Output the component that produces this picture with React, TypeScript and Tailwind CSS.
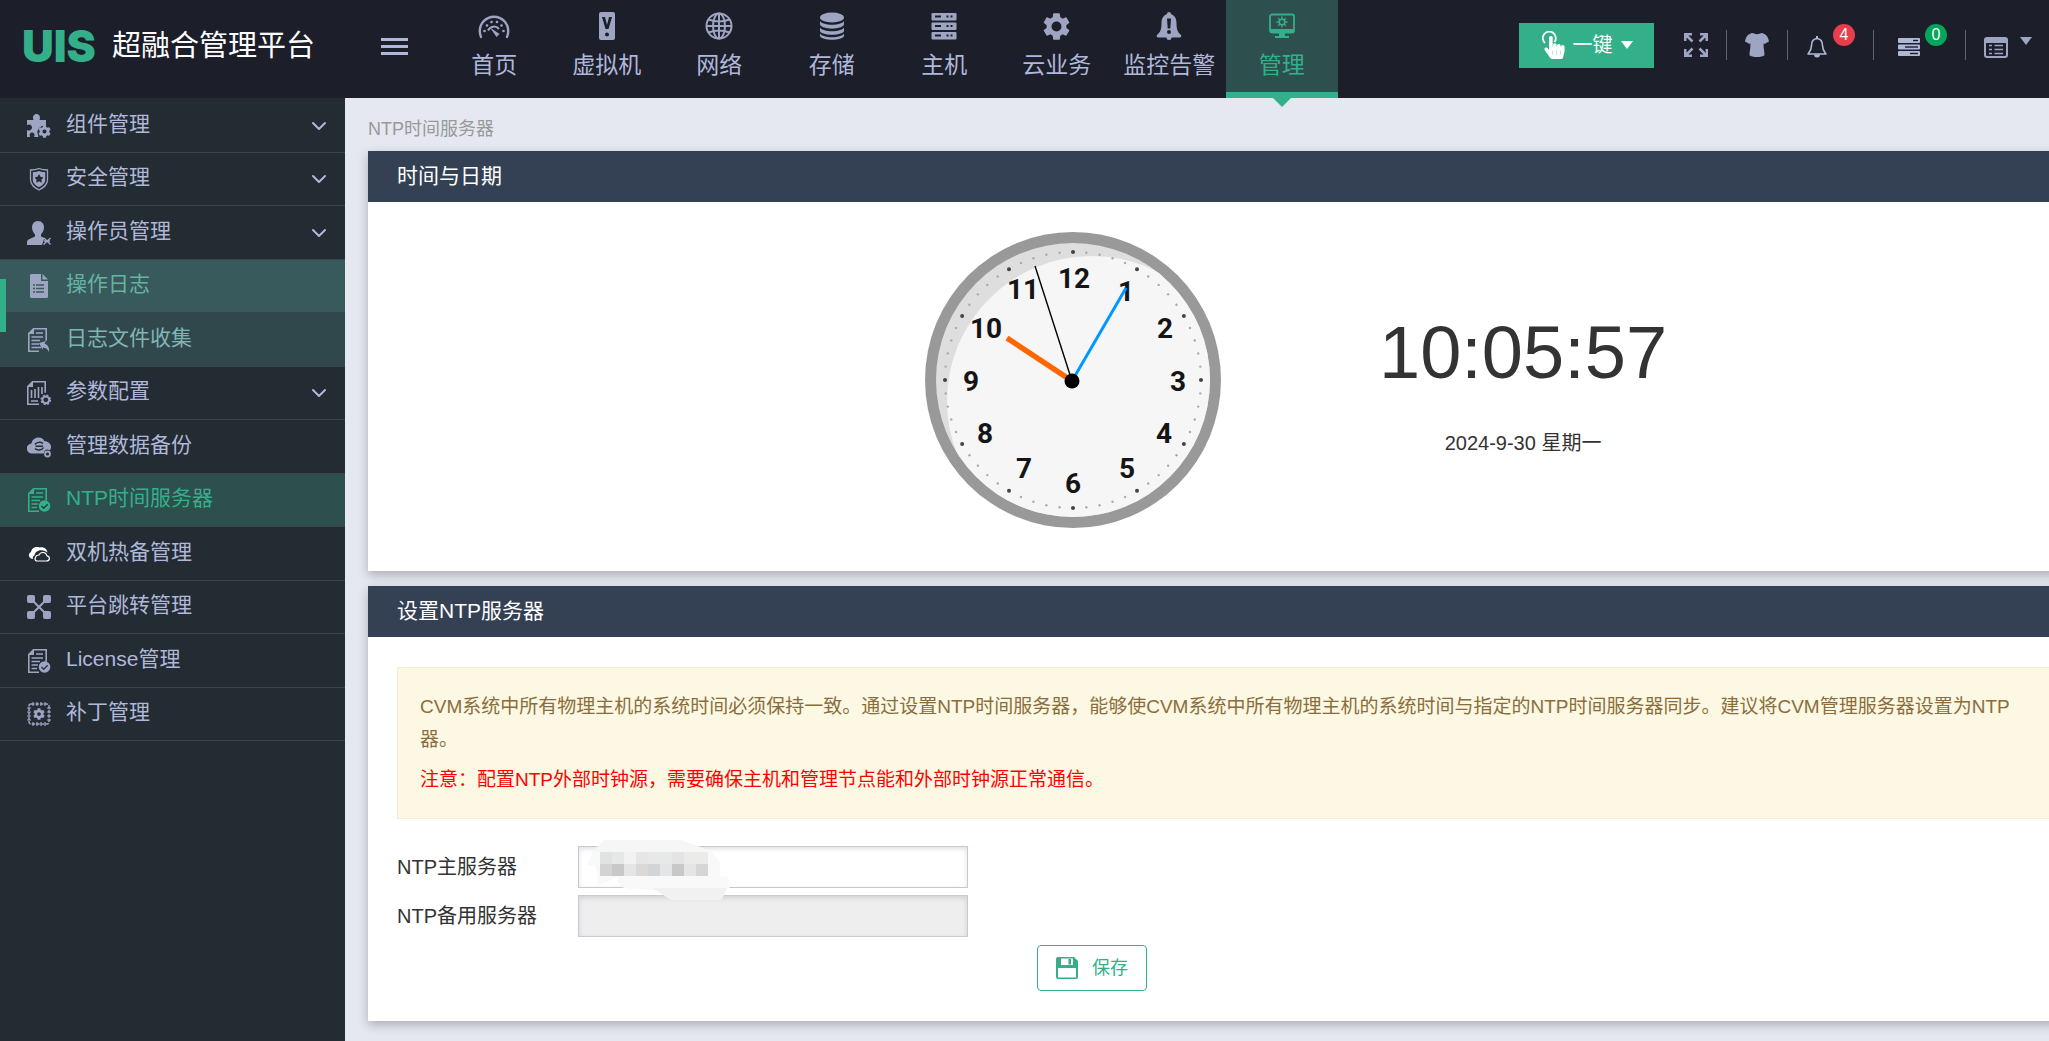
import { useState } from 'react';
import type { ReactNode } from 'react';
import { ChevronDown } from 'lucide-react';
import { FaCog, FaHandPointer, FaStar } from 'react-icons/fa';
import { MdSettings } from 'react-icons/md';

const ALERT_TEXT =
  'CVM系统中所有物理主机的系统时间必须保持一致。通过设置NTP时间服务器，能够使CVM系统中所有物理主机的系统时间与指定的NTP时间服务器同步。建议将CVM管理服务器设置为NTP';

function Svg({ size = 24, box = 24, children }: { size?: number; box?: number; children: ReactNode }) {
  return (
    <svg width={size} height={size} viewBox={`0 0 ${box} ${box}`} fill="currentColor" aria-hidden="true">
      {children}
    </svg>
  );
}

/* ---------- top navigation icons ---------- */

function GaugeIcon() {
  return (
    <Svg size={32} box={32}>
      <path d="M3 27A14.500 14.500 0 0 1 1.800 21 14.200 14.200 0 0 1 30.200 21 14.500 14.500 0 0 1 29 27" fill="none" stroke="currentColor" strokeWidth="2.400" strokeLinecap="round" />
      <path d="M12 17.500l9.500 6.500-3 3z" />
      <path d="M10 20.500a6.500 6.500 0 0 1 11-1.500" fill="none" stroke="currentColor" strokeWidth="2" />
      <circle cx="6.500" cy="21" r="1.300" />
      <circle cx="9" cy="15.500" r="1.300" />
      <circle cx="13.500" cy="12" r="1.300" />
      <circle cx="19" cy="12" r="1.300" />
      <circle cx="23.500" cy="15.500" r="1.300" />
      <circle cx="25.500" cy="21" r="1.300" />
    </Svg>
  );
}

function VmIcon() {
  return (
    <Svg size={28} box={28}>
      <path
        fillRule="evenodd"
        d="M8 0h12a2 2 0 0 1 2 2v24a2 2 0 0 1-2 2H8a2 2 0 0 1-2-2V2a2 2 0 0 1 2-2zM9 5l3.500 12h3L19 5h-3l-2 8-2-8zM14 20.500a2 2 0 1 0 0 4 2 2 0 0 0 0-4z"
      />
    </Svg>
  );
}

function GlobeIcon() {
  return (
    <svg width="28" height="28" viewBox="0 0 28 28" fill="none" stroke="currentColor" strokeWidth="2" aria-hidden="true">
      <circle cx="14" cy="14" r="12.500" />
      <ellipse cx="14" cy="14" rx="6" ry="12.500" />
      <path d="M14 1.500v25M1.500 14h25M3.500 7.500q10.500 4 21 0M3.500 20.500q10.500-4 21 0" />
    </svg>
  );
}

function StorageIcon() {
  return (
    <Svg size={28} box={28}>
      <ellipse cx="14" cy="5.500" rx="12" ry="5" />
      <path d="M2 9c3 5 21 5 24 0v3.500c-2 5.500-22 5.500-24 0z" />
      <path d="M2 15.500c3 5 21 5 24 0V19c-2 5-22 5-24 0z" />
      <path d="M2 21.500c3 5 21 5 24 0V24c-2 5-22 5-24 0z" />
    </Svg>
  );
}

function HostIcon() {
  return (
    <Svg size={28} box={28}>
      {[1, 10.500, 20].map((y) => (
        <g key={y}>
          <rect x="1.500" y={y} width="25" height="7.500" rx="1" />
          <path d={`M5 ${y + 3.500}h6M16.500 ${y + 3.500}h2M20.500 ${y + 3.500}h2`} stroke="#1c1e29" strokeWidth="2" />
        </g>
      ))}
    </Svg>
  );
}

function AlarmIcon() {
  return (
    <Svg size={28} box={28}>
      <path
        fillRule="evenodd"
        d="M14 0c1.200 0 2 .8 2 2 4 1.500 5.500 5 5.500 9 0 7 1.500 9.500 4.500 12 .8 1.200.2 2.500-1.500 2.500h-8a2.500 2.500 0 0 1-5 0h-8c-1.700 0-2.300-1.300-1.500-2.500 3-2.500 4.500-5 4.500-12 0-4 1.500-7.500 5.500-9 0-1.200.8-2 2-2zM12 6.500l.7 10h2.600l.7-10zM14 18a2 2 0 1 0 0 4 2 2 0 0 0 0-4z"
      />
    </Svg>
  );
}

function ManageIcon() {
  return (
    <Svg size={28} box={28}>
      <rect x="2" y="2.500" width="24" height="18" rx="2" fill="none" stroke="currentColor" strokeWidth="1.800" />
      <path d="M2 17h24v2.500a1.500 1.500 0 0 1-1.500 1.500h-21A1.500 1.500 0 0 1 2 19.500zM11 21h6v3h-6zM7 24h14v2H7z" />
      <circle cx="14" cy="10" r="2.800" fill="none" stroke="currentColor" strokeWidth="1.600" />
      <path d="M14 4.500v3M14 12.500v3M8.500 10h3M16.500 10h3M10.200 6.200l2 2M15.800 11.800l2 2M17.800 6.200l-2 2M12.200 11.800l-2 2" stroke="currentColor" strokeWidth="1.500" />
    </Svg>
  );
}

/* ---------- sidebar icons (24 x 24) ---------- */

function ComponentIcon() {
  return (
    <Svg>
      <path d="M0 6h6.500C5 2.500 7 0 9.500 0S14 2.500 12.500 6H19v6c-5-1-9 3-8.500 7l1 4H7c1.500-3-.5-4.500-2-4.500S2 20 3 23H0v-7c3 1.500 5-.5 5-2.500S3 9.500 0 11z" />
      <FaCog x={11} y={11} size={13} />
    </Svg>
  );
}

function ShieldIcon() {
  return (
    <Svg>
      <path d="M12 1.500c3 1.200 5.500 1.500 8.500 1.500v10c0 5-4 7.500-8.500 10C7.500 20.500 3.500 18 3.500 13V3C6.500 3 9 2.700 12 1.500z" fill="none" stroke="currentColor" strokeWidth="1.300" />
      <path d="M12 4c2.300.8 4 1.200 6.200 1.200V13c0 3.500-3 5.500-6.200 7.300C8.800 18.500 5.800 16.500 5.800 13V5.200C8 5.200 9.700 4.800 12 4z" />
      <FaStar x={7.5} y={7} size={9} color="#232b33" />
    </Svg>
  );
}

function OperatorIcon() {
  return (
    <Svg>
      <path d="M11 0c4 0 6 3 6 6.500 0 3-1.500 5-3 7v2l3.500 1.500-2.500 7H0v-3c0-3 6-4 8-5.500v-2c-1.500-2-3-4-3-7C5 3 7 0 11 0z" />
      <path d="M17 17l6.500 6.500M23.500 17L16.500 23.500M17 20h6" stroke="currentColor" strokeWidth="1.400" />
    </Svg>
  );
}

function LogIcon() {
  return (
    <Svg>
      <path d="M4.500 0H14v7h7v15.500a1.500 1.500 0 0 1-1.500 1.500h-15A1.500 1.500 0 0 1 3 22.500v-21A1.500 1.500 0 0 1 4.500 0zM15.500 0L21 5.500h-5.500z" />
      <path d="M6 11h2M9 11h8M6 14.500h2M9 14.500h8M6 18h2M9 18h8" stroke="#385a5c" strokeWidth="1.400" />
    </Svg>
  );
}

// Page outline with a folded corner, shared by the document-type icons.
function PageOutline() {
  return (
    <>
      <path d="M12 23.200H1.800V5.500L6.500.8h12.700v12" fill="none" stroke="currentColor" strokeWidth="1.600" />
      <path d="M1 6l6-6v6z" />
    </>
  );
}

function CollectIcon() {
  return (
    <Svg>
      <PageOutline />
      <path d="M9 5h7M4.500 9H16M4.500 12.500H13M4.500 16H12M4.500 19.500H14" stroke="currentColor" strokeWidth="1.400" />
      <path d="M12 15l7-2-1.500 2.500c4 1.500 5 5 4.500 8.500-1.500-3-3-4-6-4.500l-.5 2z" />
    </Svg>
  );
}

function DocCheckIcon() {
  return (
    <Svg>
      <PageOutline />
      <path d="M9 5h7M4.500 9H16M4.500 12.500H13M4.500 16H11M4.500 19.500H10" stroke="currentColor" strokeWidth="1.400" />
      <circle cx="17.500" cy="18" r="5.800" />
      <path d="M14.500 18l2.200 2.200 4-4" fill="none" stroke="#2b3a40" strokeWidth="1.500" />
    </Svg>
  );
}

function ParamIcon() {
  return (
    <Svg>
      <path d="M12 23.200H.8V5.500L5.500.8h12.700v11" fill="none" stroke="currentColor" strokeWidth="1.600" />
      <path d="M0 6l6-6v6z" />
      <path d="M4.500 9v8M8 8v9M11.500 6v11M15 6v7M4 20h7" stroke="currentColor" strokeWidth="1.600" />
      <circle cx="18.800" cy="18.800" r="3.400" fill="none" stroke="currentColor" strokeWidth="2" />
      <circle cx="18.800" cy="18.800" r="4.700" fill="none" stroke="currentColor" strokeWidth="1.300" strokeDasharray="2 1.700" />
    </Svg>
  );
}

function BackupIcon() {
  return (
    <Svg>
      <path d="M5 18.500a5 5 0 0 1-.5-10C5 5 8 2.500 11.500 2.500c3 0 5 1.500 6 3.700 3.700 0 6.500 2.500 6.500 5.800 0 1.500-.5 2.500-1.200 3.300-2.800-2-5.800-.3-6 3.200z" />
      <path d="M8 9.500a5 4 0 0 1 8-1M16.500 12.500a5 4 0 0 1-8.500 1M8.500 11.200h7.500" fill="none" stroke="#232b33" strokeWidth="1.400" />
      <circle cx="20.500" cy="19" r="2.500" fill="none" stroke="currentColor" strokeWidth="1.800" />
    </Svg>
  );
}

function CloudsIcon() {
  return (
    <Svg>
      <path d="M4 16.500C1 15 1.500 11 4 10c.5-4 5-6 8.500-4.500C17 4.500 20 7 20.500 10.500 14 6 8 9 7.500 13.500 6 14 5.500 15.500 6 17z" fill="#fff" />
      <path d="M9.500 19h10c3.500 0 4-4.500.5-5.200-1-4-6.500-4.500-8-.8-4 0-5 5-2.500 6z" fill="none" stroke="#fff" strokeWidth="1.200" />
    </Svg>
  );
}

function JumpIcon() {
  return (
    <Svg>
      <path d="M4 4l16 16M20 4L4 20" stroke="currentColor" strokeWidth="2" />
      <rect width="8" height="8" rx="2" />
      <rect x="16" width="8" height="8" rx="2" />
      <rect y="16" width="8" height="8" rx="2" />
      <rect x="16" y="16" width="8" height="8" rx="2" />
    </Svg>
  );
}

function PatchIcon() {
  return (
    <Svg>
      <rect x="2" y="2" width="20" height="20" rx="2" fill="none" stroke="currentColor" strokeWidth="1.500" strokeDasharray="3.500 1" />
      <path d="M6 0v4M10 0v4M14 0v4M18 0v4M6 20v4M10 20v4M14 20v4M18 20v4M0 6h4M0 10h4M0 14h4M0 18h4M20 6h4M20 10h4M20 14h4M20 18h4" stroke="currentColor" strokeWidth="1.200" />
      <FaCog x={6} y={6} size={12} />
    </Svg>
  );
}

/* ---------- header tools ---------- */

function ExpandIcon() {
  return (
    <svg width="24" height="24" viewBox="0 0 24 24" fill="none" stroke="currentColor" strokeWidth="2.500" aria-hidden="true">
      <path d="M1.200 8V1.200H8M1.500 1.500l7 7M16 1.200h6.800V8M22.500 1.500l-7 7M1.200 16v6.800H8M1.500 22.500l7-7M16 22.800h6.800V16M22.500 22.500l-7-7" />
    </svg>
  );
}

function ShirtIcon() {
  return (
    <Svg>
      <path d="M7.500 0c2.500 1.500 6.500 1.500 9 0 4 .8 6.500 3 7.500 8.500L19.500 11l-.8-.8c-.5 4 .8 8 .8 12-2 2.400-13 2.400-15 0 0-4 1.300-8 .8-12l-.8.8L0 8.500C1 3 3.500.8 7.500 0z" />
    </Svg>
  );
}

function BellIcon() {
  return (
    <Svg size={22} box={22}>
      <path d="M11 2.500c4 .5 5.500 3.500 5.500 7 0 4.500 1.500 6 3.500 8.500H2c2-2.500 3.500-4 3.500-8.500 0-3.500 1.500-6.500 5.500-7z" fill="none" stroke="currentColor" strokeWidth="1.600" strokeLinejoin="round" />
      <path d="M10 0h2v3h-2zM8 18.500h6a3 3 0 0 1-6 0z" />
    </Svg>
  );
}

function TasksIcon() {
  return (
    <Svg size={22} box={22}>
      {[2, 8.500, 15].map((y, i) => (
        <g key={y}>
          <rect x="0" y={y} width="22" height="5" rx="1" />
          <path d={`M${[15, 7, 12][i]} ${y + 2.500}h${[5, 13, 8][i]}`} stroke="#1c1e29" strokeWidth="1.400" />
        </g>
      ))}
    </Svg>
  );
}

function ListIcon() {
  return (
    <Svg>
      <path fillRule="evenodd" d="M3 2h18a3 3 0 0 1 3 3v15a3 3 0 0 1-3 3H3a3 3 0 0 1-3-3V5a3 3 0 0 1 3-3zM2 8v12a1 1 0 0 0 1 1h18a1 1 0 0 0 1-1V8z" />
      <path d="M5 10.500h3M10.500 10.500H19M5 14.500h3M10.500 14.500H19M5 18.500h3M10.500 18.500H19" stroke="currentColor" strokeWidth="1.600" />
    </Svg>
  );
}

function OneKeyIcon() {
  return (
    <svg width="24" height="28" viewBox="0 0 24 28" fill="currentColor" aria-hidden="true">
      <path d="M4 12a6.500 6.500 0 1 1 9.500-1" fill="none" stroke="currentColor" strokeWidth="1.800" />
      <FaHandPointer x={2} y={5} size={23} />
    </svg>
  );
}

function SaveIcon() {
  return (
    <Svg size={22} box={22}>
      <path fillRule="evenodd" d="M2 0h16l4 4v16a2 2 0 0 1-2 2H2a2 2 0 0 1-2-2V2a2 2 0 0 1 2-2zM5 1.500V8h12V1.500zM2 11v9.500h18V11z" />
      <path d="M12.500 2h2.500v5.500h-2.500z" />
    </Svg>
  );
}

function Caret() {
  return <span className="block border-x-[6px] border-t-[8px] border-x-transparent border-t-current" />;
}

const topNav = [
  { label: '首页', icon: <GaugeIcon /> },
  { label: '虚拟机', icon: <VmIcon /> },
  { label: '网络', icon: <GlobeIcon /> },
  { label: '存储', icon: <StorageIcon /> },
  { label: '主机', icon: <HostIcon /> },
  { label: '云业务', icon: <MdSettings size={33} /> },
  { label: '监控告警', icon: <AlarmIcon /> },
  { label: '管理', icon: <ManageIcon />, active: true },
];

const sideNav = [
  { label: '组件管理', icon: <ComponentIcon />, expandable: true },
  { label: '安全管理', icon: <ShieldIcon />, expandable: true },
  { label: '操作员管理', icon: <OperatorIcon />, expandable: true },
  { label: '操作日志', icon: <LogIcon />, tone: 'bg-[#385a5c] text-[#66b3a3]' },
  { label: '日志文件收集', icon: <CollectIcon />, tone: 'bg-[#30484c] text-[#80b5b5]' },
  { label: '参数配置', icon: <ParamIcon />, expandable: true },
  { label: '管理数据备份', icon: <BackupIcon /> },
  { label: 'NTP时间服务器', icon: <DocCheckIcon />, tone: 'bg-[#2d4f4e] text-[#33b089]', active: true },
  { label: '双机热备管理', icon: <CloudsIcon /> },
  { label: '平台跳转管理', icon: <JumpIcon /> },
  { label: 'License管理', icon: <DocCheckIcon /> },
  { label: '补丁管理', icon: <PatchIcon /> },
];

function Header() {
  return (
    <header className="flex h-[98px] shrink-0 items-start bg-[#1c1e29] text-[#9ea5c2]">
      <div className="flex h-[92px] w-[345px] shrink-0 items-center gap-4 pl-[22px]">
        <span className="font-['Inter'] text-[44px] leading-none font-black text-[#33b089]">UIS</span>
        <span className="text-[29px] leading-none whitespace-nowrap text-white">超融合管理平台</span>
      </div>
      <div className="flex h-[92px] w-[93px] shrink-0 items-center pl-9">
        <button className="flex flex-col gap-1 text-[#b0b8da]" aria-label="菜单">
          <span className="h-[3px] w-[27px] bg-current" />
          <span className="h-[3px] w-[27px] bg-current" />
          <span className="h-[3px] w-[27px] bg-current" />
        </button>
      </div>
      <nav className="grid h-full w-[900px] shrink-0 grid-cols-8">
        {topNav.map((item) => (
          <a
            key={item.label}
            href="#"
            className={
              item.active
                ? 'relative flex flex-col items-center border-b-[6px] border-[#33b089] bg-[#2d4f4e] pt-[10px] text-[#33b089]'
                : 'flex flex-col items-center pt-[10px]'
            }
          >
            <span className="flex h-8 items-center">{item.icon}</span>
            <span className={item.active ? 'mt-2 text-[23px] leading-[30px]' : 'mt-2 text-[23px] leading-[30px] text-[#b0b8da]'}>
              {item.label}
            </span>
            {item.active && (
              <span className="absolute -bottom-[15px] z-10 border-x-[9px] border-t-[9px] border-x-transparent border-t-[#33b089]" />
            )}
          </a>
        ))}
      </nav>
      <div className="ml-auto flex h-[90px] shrink-0 items-center pr-[17px]">
        <button className="mr-[30px] flex h-[45px] w-[135px] items-center justify-center gap-2 bg-[#33b089] text-[20px] text-white">
          <OneKeyIcon />
          一键
          <Caret />
        </button>
        <button aria-label="全屏" className="mr-[18px]"><ExpandIcon /></button>
        <span className="h-[30px] w-px bg-[#63656d]" />
        <button aria-label="换肤" className="mx-[18px]"><ShirtIcon /></button>
        <span className="h-[30px] w-px bg-[#63656d]" />
        <button aria-label="告警" className="relative mr-[45px] ml-[18px] pt-1 text-[#b0b8da]">
          <BellIcon />
          <span className="absolute -top-[8px] left-[27px] flex h-[22px] w-[22px] items-center justify-center rounded-full bg-[#e83e4c] text-[16px] leading-none text-white">4</span>
        </button>
        <span className="h-[30px] w-px bg-[#63656d]" />
        <button aria-label="任务" className="relative mr-[45px] ml-6 pt-1 text-[#b0b8da]">
          <TasksIcon />
          <span className="absolute -top-[8px] left-[27px] flex h-[22px] w-[22px] items-center justify-center rounded-full bg-[#00a65a] text-[16px] leading-none text-white">0</span>
        </button>
        <span className="h-[30px] w-px bg-[#63656d]" />
        <button aria-label="更多" className="ml-[18px] flex items-center gap-3 pt-1">
          <ListIcon />
          <span className="pb-3"><Caret /></span>
        </button>
      </div>
    </header>
  );
}

function Sidebar() {
  return (
    <aside className="relative w-[345px] shrink-0 bg-[#232b33] pt-px">
      <ul>
        {sideNav.map((item) => (
          <li key={item.label} className="h-[53px] border-b border-[#3c444e] odd:h-[54px]">
            <a href="#" className={`flex h-full items-center gap-[15px] pr-[14px] pl-[27px] text-[21px] ${item.tone ?? 'text-[#b0b8da]'}`}>
              <span className={item.active ? '' : 'text-[#9ea5c2]'}>{item.icon}</span>
              <span className="flex-1 pb-1 leading-[30px]">{item.label}</span>
              {item.expandable && <ChevronDown size={24} strokeWidth={2} />}
            </a>
          </li>
        ))}
      </ul>
      <span className="absolute top-[181px] left-0 h-[53px] w-[6px] bg-[#33b089]" />
    </aside>
  );
}

function Panel({ title, children }: { title: string; children: ReactNode }) {
  return (
    <section className="-mr-24 bg-white shadow-[0_4px_10px_rgba(0,0,0,0.25)]">
      <h2 className="h-[51px] bg-[#344054] pl-[29px] text-[21px] leading-[49px] text-white">{title}</h2>
      {children}
    </section>
  );
}

const clockDigits: [number, number, number][] = [
  [12, 149, 46], [1, 201, 59], [2, 240, 96], [3, 253, 149], [4, 239, 201], [5, 202, 236],
  [6, 148, 251], [7, 99, 236], [8, 60, 201], [9, 46, 149], [10, 61, 96], [11, 98, 57],
];

function Clock() {
  return (
    <svg width="297" height="297" viewBox="0 0 297 297" role="img" aria-label="10:05:57">
      <clipPath id="face">
        <circle cx="148" cy="148" r="137" />
      </clipPath>
      <circle cx="148" cy="148" r="148" fill="#999" />
      <circle cx="148" cy="148" r="137" fill="#dedede" />
      <circle cx="167" cy="169" r="145" fill="#f6f6f6" clipPath="url(#face)" />
      {Array.from({ length: 60 }, (_, i) => {
        const a = (i * Math.PI) / 30;
        const hour = i % 5 === 0;
        return (
          <circle
            key={i}
            cx={148 + 128 * Math.sin(a)}
            cy={148 - 128 * Math.cos(a)}
            r={hour ? 2 : 1.2}
            fill={hour ? '#444' : '#aaa'}
          />
        );
      })}
      {clockDigits.map(([n, x, y]) => (
        <text key={n} x={x} y={y + 10} textAnchor="middle" className="fill-[#151515] font-['Roboto'] text-[28px] font-bold">
          {n}
        </text>
      ))}
      <path d="M147 149L82 106" stroke="#f60" strokeWidth="5.500" />
      <path d="M147 149L201 56" stroke="#09f" strokeWidth="3" />
      <path d="M147 149L110 34" stroke="#000" strokeWidth="1.400" />
      <circle cx="147" cy="149" r="7.500" />
    </svg>
  );
}

const mosaic = [
  ['#dfe3e1', '#e6e8e7', '#f1f2f2', '#e8e6e4', '#e6e9e7', '#e7e9e9', '#e3e5e4', '#ebebe9', '#ecebea'],
  ['#d3d3d2', '#c8c8c8', '#e3e5e7', '#dcd8d5', '#d3d4d6', '#e3e5e8', '#c8c8c8', '#e5e5e5', '#d8d6d4'],
];

// Smudge that hides the server address.
function Mosaic() {
  return (
    <svg width="146" height="60" viewBox="0 0 146 60" className="pointer-events-none absolute -top-[6px] left-[9px]" aria-hidden="true">
      <path
        d="M18 0H94L113 7L126 13L133 23V36L141 37L145 46L140 49L134 60H84L69 50L42 49L31 46V37L20 42L11 45V36L8 25L0 26L5 13V11Z"
        fill="#f9f9fa"
      />
      <path d="M18 0H94L113 7L120 12H5Z" fill="#f6f6f6" />
      <path d="M66 48H140L134 60H84Z" fill="#f1f1f4" />
      {mosaic.map((row, y) =>
        row.map((color, x) => <rect key={`${x}-${y}`} x={13 + x * 12} y={12 + y * 12} width="12" height="12" fill={color} />)
      )}
    </svg>
  );
}

export default function App() {
  const [primary, setPrimary] = useState('');
  const inputClass =
    'h-[42px] w-[390px] border border-[#c8c8d6] bg-white px-3 shadow-[inset_0_2px_5px_rgba(0,0,0,0.12)] outline-none disabled:bg-[#eee]';

  return (
    <div className="flex min-h-screen flex-col overflow-hidden bg-[#e5e8f0] font-['Liberation_Sans','Noto_Sans_CJK_SC',sans-serif] text-[20px] text-[#333]">
      <Header />
      <div className="flex flex-1">
        <Sidebar />
        <main className="flex min-w-0 flex-1 flex-col overflow-hidden pb-5 pl-[23px]">
          <div className="h-[53px] pt-[17px] text-[18px] leading-[28px] text-[#999]">NTP时间服务器</div>
          <div className="flex flex-col gap-[15px]">
            <Panel title="时间与日期">
              <div className="flex items-start gap-[157px] pt-[30px] pb-[42px] pl-[557px]">
                <Clock />
                <div className="flex flex-col items-center pt-[71px]">
                  <div className="text-[74px] leading-[100px]">10:05:57</div>
                  <div className="mt-[25px] leading-[30px]">2024-9-30 星期一</div>
                </div>
              </div>
            </Panel>
            <Panel title="设置NTP服务器">
              <form className="p-[30px] pl-[29px]" onSubmit={(e) => e.preventDefault()}>
                <div className="mb-[27px] border border-[#faebcc] bg-[#fcf8e3] px-[22px] pt-[22px] pb-[22px] text-[19px] leading-[33px] text-[#8a6d3b]">
                  <p className="whitespace-nowrap">
                    {ALERT_TEXT}
                    <br />
                    器。
                  </p>
                  <p className="mt-[7px] text-[#f00]">注意：配置NTP外部时钟源，需要确保主机和管理节点能和外部时钟源正常通信。</p>
                </div>
                <div className="mb-[7px] flex items-center">
                  <label htmlFor="ntp-primary" className="w-[181px]">NTP主服务器</label>
                  <div className="relative flex">
                    <input id="ntp-primary" className={inputClass} value={primary} onChange={(e) => setPrimary(e.target.value)} />
                    <Mosaic />
                  </div>
                </div>
                <div className="mb-2 flex items-center">
                  <label htmlFor="ntp-backup" className="w-[181px]">NTP备用服务器</label>
                  <input id="ntp-backup" className={inputClass} disabled />
                </div>
                <button
                  type="submit"
                  className="ml-[640px] flex h-[46px] w-[110px] items-center justify-center gap-[14px] rounded border border-[#33b089] text-[18px] text-[#33b089]"
                >
                  <SaveIcon />
                  保存
                </button>
              </form>
            </Panel>
          </div>
        </main>
      </div>
    </div>
  );
}
